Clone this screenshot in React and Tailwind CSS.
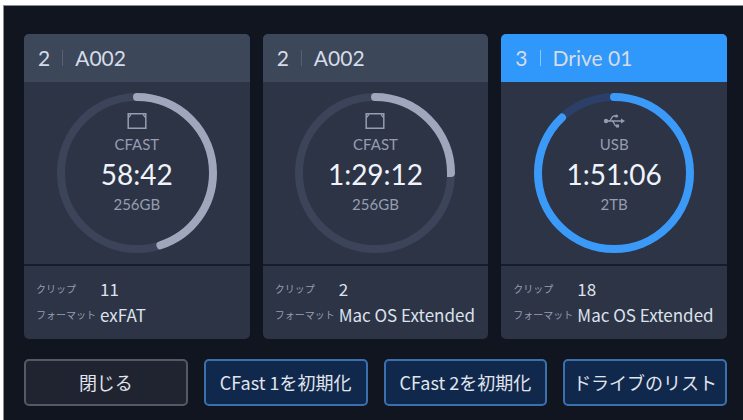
import React from "react";
import clsx from "clsx";

const drives = [
  {
    slot: 2,
    name: "A002",
    type: "CFAST",
    time: "58:42",
    size: "256GB",
    clips: 11,
    format: "exFAT",
    used: 45,
  },
  {
    slot: 2,
    name: "A002",
    type: "CFAST",
    time: "1:29:12",
    size: "256GB",
    clips: 2,
    format: "Mac OS Extended",
    used: 25,
  },
  {
    slot: 3,
    name: "Drive 01",
    type: "USB",
    time: "1:51:06",
    size: "2TB",
    clips: 18,
    format: "Mac OS Extended",
    used: 88,
    active: true,
  },
];

const actions = [
  { label: "閉じる", plain: true },
  { label: "CFast 1を初期化" },
  { label: "CFast 2を初期化" },
  { label: "ドライブのリスト" },
];

const CardIcon = () => (
  <svg width="20" height="18" viewBox="0 0 20 18" fill="none" stroke="#969db0" strokeWidth="1.5">
    <path d="M1.2 1.8H18.8V16.2H1.2Z" />
    <path d="M1.500 5.500L4 2.500M18.500 5.500L16 2.500" strokeWidth="1.2" />
  </svg>
);

const UsbIcon = () => (
  <svg width="22" height="18" viewBox="0 0 22 18" fill="none" stroke="#969db0" strokeWidth="1.3">
    <path d="M3 9H19" />
    <path d="M6 9C8.5 9 8 4 11 4H13" />
    <path d="M9 9C11.5 9 10.5 14 13.5 14H14" />
    <circle cx="3" cy="9" r="2.2" fill="#969db0" stroke="none" />
    <circle cx="13.5" cy="4" r="1.6" fill="#969db0" stroke="none" />
    <path d="M13 12.5H16V15.5H13Z" fill="#969db0" stroke="none" />
    <path d="M18 6.5L22 9L18 11.5Z" fill="#969db0" stroke="none" />
  </svg>
);

// pathLength is 100, so the dash equals the percentage used
const Ring = ({ used, active }) => (
  <svg className="col-start-1 row-start-1 size-40" viewBox="0 0 160 160" fill="none" strokeWidth="8">
    <circle cx="80" cy="80" r="76" stroke={active ? "#2b3f68" : "#3c4459"} />
    <circle
      cx="80"
      cy="80"
      r="76"
      pathLength="100"
      strokeDasharray={`${used} 100`}
      strokeLinecap="round"
      stroke={active ? "#3b99f8" : "#a0a6bb"}
      transform="rotate(-90 80 80)"
    />
  </svg>
);

const DriveCard = ({ drive }) => (
  <section className="min-w-0 overflow-hidden rounded-[5px] bg-[#2c3446]">
    <h2
      className={clsx(
        "flex h-12 items-center px-[14px] text-[21px] text-[#d5dce8]",
        drive.active ? "bg-[#3098fb]" : "bg-[#3c475a]"
      )}
    >
      <span>{drive.slot}</span>
      <span
        className={clsx(
          "mx-3 h-4 w-px",
          drive.active ? "bg-[#8cc6fb]" : "bg-[#566176]"
        )}
      />
      <span>{drive.name}</span>
    </h2>

    <div className="grid place-items-center border-b-2 border-[#161c2b] py-[11px]">
      <Ring used={drive.used} active={drive.active} />
      <div className="col-start-1 row-start-1 flex flex-col items-center pb-5 text-[15px] leading-5 text-[#969db0]">
        {drive.type === "USB" ? <UsbIcon /> : <CardIcon />}
        <p className="mt-1">{drive.type}</p>
        <p className="text-[28px] leading-10 text-[#f0f3fa]">{drive.time}</p>
        <p>{drive.size}</p>
      </div>
    </div>

    <dl className="grid grid-cols-[64px_1fr] items-center px-3 pt-[10px] pb-[11px] font-['Noto_Sans_CJK_JP',sans-serif] text-[17px] leading-[26px] text-[#dde2ec]">
      <dt className="text-[10px] text-[#969db0]">クリップ</dt>
      <dd>{drive.clips}</dd>
      <dt className="text-[10px] whitespace-nowrap text-[#969db0]">フォーマット</dt>
      <dd className="whitespace-nowrap">{drive.format}</dd>
    </dl>
  </section>
);

const App = () => {
  return (
    <div className="min-h-screen overflow-hidden bg-white pt-[6px] pl-1">
      <main className="min-h-[calc(100vh-6px)] bg-[#10151f] pt-7 pr-4 pb-3 pl-5 font-[Lato,sans-serif] outline outline-[#8a8d90]">
        <div className="grid grid-cols-3 gap-[13px]">
          {drives.map((drive, index) => (
            <DriveCard key={index} drive={drive} />
          ))}
        </div>

        <div className="mt-5 grid grid-cols-4 gap-4">
          {actions.map((action) => (
            <button
              key={action.label}
              type="button"
              className={clsx(
                "h-[47px] rounded-[5px] border-2 font-['Noto_Sans_CJK_JP',sans-serif] text-[18px] whitespace-nowrap text-[#e0e5ee]",
                action.plain
                  ? "border-[#555966] bg-[#202431]"
                  : "border-[#3a70ae] bg-[#10284b]"
              )}
            >
              {action.label}
            </button>
          ))}
        </div>
      </main>
    </div>
  );
};

export default App;
